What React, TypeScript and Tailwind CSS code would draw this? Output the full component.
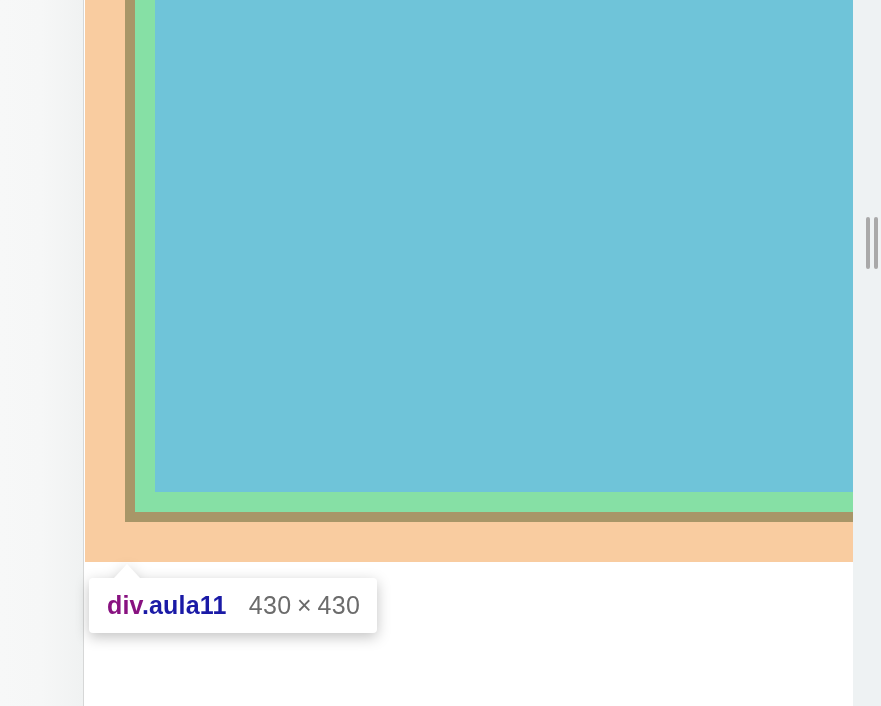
import React from 'react';

// Element highlight overlay: margin / border / padding / content boxes
function BoxModel() {
  return (
    <div className="h-[562px] bg-[#f9cca0] pl-[40px] pb-[40px] flex">
      <div className="flex-1 flex bg-[#a89668] pl-[10px] pb-[10px]">
        <div className="flex-1 flex bg-[#86e0a5] pl-[20px] pb-[20px]">
          <div className="flex-1 bg-[#6fc4d9]" />
        </div>
      </div>
    </div>
  );
}

function Tooltip() {
  return (
    <div className="absolute left-[5px] top-[564px] drop-shadow-[0_4px_7px_rgba(0,0,0,0.24)]">
      <div className="ml-[25px] w-0 h-0 border-l-[13px] border-r-[13px] border-b-[14px] border-l-transparent border-r-transparent border-b-white" />
      <div
        className="flex items-center gap-[22px] w-[288px] h-[55px] px-[18px] bg-white rounded-[4px] text-[25px] leading-none whitespace-nowrap"
        style={{ fontFamily: '"Liberation Sans", Arial, sans-serif' }}
      >
        <span className="shrink-0 font-bold tracking-[0.2px]">
          <span className="text-[#881280]">div</span>
          <span className="text-[#1a1aa6]">.aula11</span>
        </span>
        <span className="shrink-0 text-[#6b6b6b] tracking-[0.4px]">430{'\u2009×\u2009'}430</span>
      </div>
    </div>
  );
}

export default function App() {
  return (
    <div className="w-[881px] h-[706px] flex overflow-hidden bg-white">
      <div className="w-[83px] h-full bg-gradient-to-r from-[#f7f8f8] via-[#f6f7f7] to-[#f0f2f2]" />
      <div className="w-px h-full bg-[#d6d7d7]" />
      <div className="relative w-[769px] h-full bg-white pl-px">
        <BoxModel />
        <Tooltip />
      </div>
      <div className="w-[28px] h-full bg-[#eef2f3] pt-[217px] pl-[13px] flex gap-[4px]">
        <div className="w-[4px] h-[52px] rounded-[2px] bg-[#a9a9a9]" />
        <div className="w-[4px] h-[52px] rounded-[2px] bg-[#a9a9a9]" />
      </div>
    </div>
  );
}
